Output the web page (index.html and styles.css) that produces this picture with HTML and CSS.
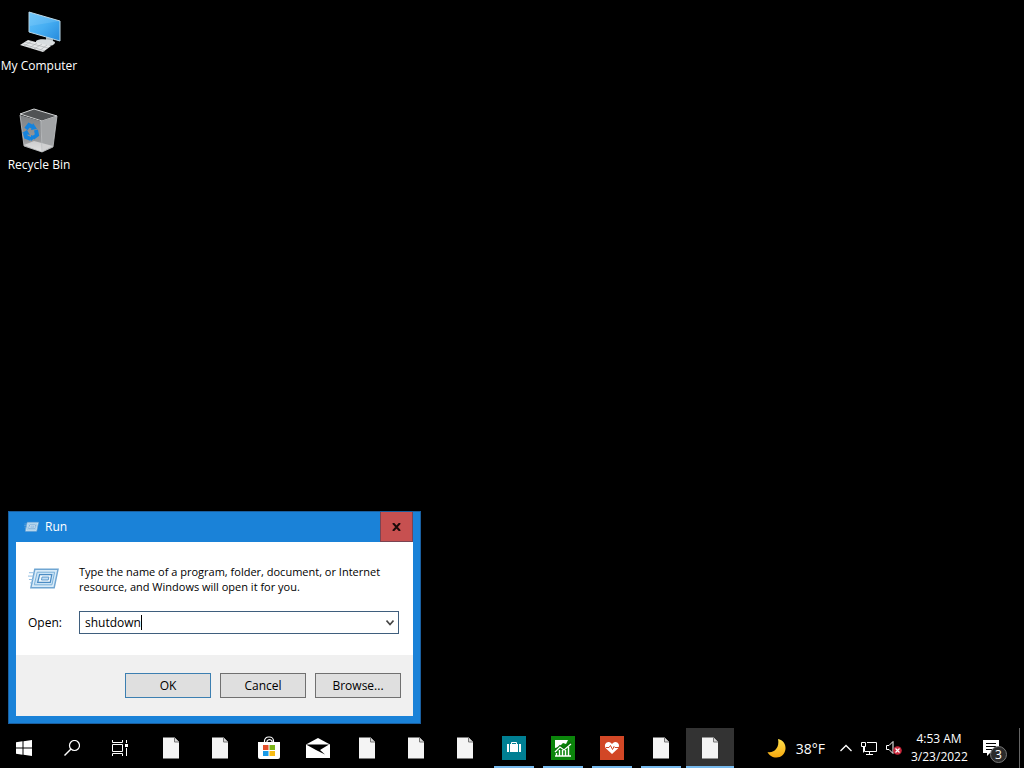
FILE: index.html
```html
<!DOCTYPE html>
<html lang="en">
<head>
  <meta charset="UTF-8">
  <meta name="viewport" content="width=device-width, initial-scale=1.0">
  <title>Desktop</title>
  <link rel="stylesheet" href="styles.css">
</head>
<body>
  <!-- shared icons -->
  <svg class="defs" width="0" height="0" aria-hidden="true">
    <symbol id="icon-file" viewBox="0 0 16 22">
      <path d="M0 .5h11.500L16 5v16.500H0z" fill="#f4f4f4"/>
      <path d="M11.500.5V5H16" fill="#d8d8d8" stroke="#777" stroke-width="1"/>
    </symbol>
    <symbol id="icon-run" viewBox="0 0 32 22">
      <path d="M7 1h24l-4 19H3z" fill="#d9ebf8" stroke="#6fa5d2" stroke-width="1.500"/>
      <path d="M9.500 4h18l-2.800 13H6.500z" fill="#cbe4f6" stroke="#79afd9"/>
      <path d="M12 6.500h12.500L23 14.500H10z" fill="#f1f8fd" stroke="#4c8cc4" stroke-width="1.300"/>
      <path d="M14.500 9h7l-.6 3h-7z" fill="#c3def3" stroke="#5f9bcd"/>
      <path d="M1 4.500h6M0 8h6M1 11.500h4M2 15h3" stroke="#8fbde2"/>
    </symbol>
  </svg>

  <main class="desktop">
    <a class="shortcut" href="#">
      <svg width="46" height="46" viewBox="0 0 46 46">
        <defs>
          <linearGradient id="screen" x1="0" y1="0" x2="1" y2="1">
            <stop offset="0" stop-color="#64c3fb"/>
            <stop offset=".5" stop-color="#46aef2"/>
            <stop offset="1" stop-color="#2589dc"/>
          </linearGradient>
        </defs>
        <path d="M30 28l7 2v5l-7-2z" fill="#a9b3b8"/>
        <path d="M20 33c2-2 8-2 15-1l4 2c0 3-4 4-7 4l-12-3z" fill="#d8dddf"/>
        <path d="M13 4l31 9v20l-31-9z" fill="url(#screen)" stroke="#b9d6e6"/>
        <path d="M13 4l31 9L14 18z" fill="#fff" opacity=".1"/>
        <path d="M12 32l23 6-8 6-23-7z" fill="#e6e8e9"/>
        <path d="M9 34l23 6M7 36l22 7M16 33l-8 5M21 35l-8 5M26 36l-8 5M31 37l-8 6" stroke="#a6abad" stroke-width=".6"/>
      </svg>
      <span>My Computer</span>
    </a>
    <a class="shortcut" href="#">
      <svg width="46" height="46" viewBox="0 0 46 46">
        <defs>
          <linearGradient id="bin" x1="0" y1="0" x2="0" y2="1">
            <stop offset="0" stop-color="#7f8285"/>
            <stop offset=".7" stop-color="#98999b"/>
            <stop offset="1" stop-color="#d0d0d0"/>
          </linearGradient>
        </defs>
        <path d="M4 7l14-5 23 7-15 5z" fill="#505254" stroke="#d4d6d7"/>
        <path d="M4 8l21 6 1 31-18-6z" fill="url(#bin)"/>
        <path d="M25 14l16-5-4 31-11 5z" fill="#a2a4a6"/>
        <path d="M8 38l10-4 19 5-11 6z" fill="#efefef" opacity=".6"/>
        <path d="M4 8l4 31 18 6 11-5 4-31M25 14l1 31" fill="none" stroke="#c4c7c9" stroke-width=".8"/>
        <g fill="none" stroke="#1583dd" stroke-width="4">
          <path d="M10 22l3-4 4 2"/>
          <path d="M20 23l1 5-4 3"/>
          <path d="M15 32l-5-2-1-4"/>
        </g>
        <path d="M17 16l4 6-6 1zM20 30l-5 4v-6zM6 26l5-3 3 5z" fill="#1583dd"/>
      </svg>
      <span>Recycle Bin</span>
    </a>

    <form class="dialog" role="dialog" aria-labelledby="run-title">
      <div class="titlebar">
        <svg width="15" height="12"><use href="#icon-run"/></svg>
        <span id="run-title">Run</span>
        <button type="button" class="close" aria-label="Close">
          <svg width="9" height="8" viewBox="0 0 9 8"><path d="M1 0l7 8M8 0L1 8" stroke="#1c0b0a" stroke-width="2"/></svg>
        </button>
      </div>
      <div class="dialog-body">
        <svg class="run-icon" width="31" height="22"><use href="#icon-run"/></svg>
        <p>Type the name of a program, folder, document, or Internet<br>resource, and Windows will open it for you.</p>
        <label for="open">Open:</label>
        <div class="combo">
          <input type="text" id="open" value="shutdown" autocomplete="off" spellcheck="false">
          <i class="caret"></i>
          <button type="button" aria-label="Show history">
            <svg width="8" height="6" viewBox="0 0 8 6"><path d="M.5.500L4 4.500 7.500.500" fill="none" stroke="#444" stroke-width="1.600"/></svg>
          </button>
        </div>
      </div>
      <div class="dialog-footer">
        <button type="button" class="default">OK</button>
        <button type="button">Cancel</button>
        <button type="button">Browse...</button>
      </div>
    </form>
  </main>

  <footer class="taskbar">
    <div class="system">
      <button aria-label="Start">
        <svg width="16" height="16" viewBox="0 0 16 16" fill="#fff"><path d="M0 2.200L6.500 1.300V7.500H0zM7.500 1.200L16 0v7.500H7.500zM0 8.500h6.500v6.200L0 13.800zM7.500 8.500H16V16l-8.500-1.200z"/></svg>
      </button>
      <button aria-label="Search">
        <svg width="16" height="16" viewBox="0 0 16 16" fill="none" stroke="#fff"><circle cx="10.500" cy="5.500" r="5" stroke-width="1.200"/><path d="M7 9L.5 15.500" stroke-width="1.400"/></svg>
      </button>
      <button aria-label="Task view">
        <svg width="16" height="16" viewBox="0 0 16 16" fill="none" stroke="#fff"><path d="M.5 0v2.500h10V0M.5 4.500h10v7H.5zM.5 16v-2.500h10V16M14.500 0v3M14.500 8v8"/><path d="M13 4h3v3h-3z" fill="#fff" stroke="none"/></svg>
      </button>
    </div>
    <nav class="apps">
      <button aria-label="File"><svg width="16" height="22"><use href="#icon-file"/></svg></button>
      <button aria-label="File"><svg width="16" height="22"><use href="#icon-file"/></svg></button>
      <button aria-label="Store">
        <svg width="24" height="24" viewBox="0 0 24 24">
          <path d="M7.500 7V5a4 4 0 0 1 4-4h1a4 4 0 0 1 4 4v2M10 7V5a3 3 0 0 1 5 0v2" fill="none" stroke="#fff" stroke-width="1.200"/>
          <path d="M1 6h22v15a2 2 0 0 1-2 2H3a2 2 0 0 1-2-2z" fill="#fff"/>
          <path d="M6 9h5.500v5H6z" fill="#e4502b"/>
          <path d="M12.500 9H18v5h-5.500z" fill="#7cb518"/>
          <path d="M6 15h5.500v5H6z" fill="#1a9be8"/>
          <path d="M12.500 15H18v5h-5.500z" fill="#f8bc14"/>
        </svg>
      </button>
      <button aria-label="Mail">
        <svg width="24" height="20" viewBox="0 0 24 20"><path d="M0 6.500L12 0l12 6.500V20H0z" fill="#fff"/><path d="M0 6.500h23L14 12l5 4.500L10 12z" fill="#000"/></svg>
      </button>
      <button aria-label="File"><svg width="16" height="22"><use href="#icon-file"/></svg></button>
      <button aria-label="File"><svg width="16" height="22"><use href="#icon-file"/></svg></button>
      <button aria-label="File"><svg width="16" height="22"><use href="#icon-file"/></svg></button>
      <button class="running" aria-label="Travel">
        <svg width="24" height="24" viewBox="0 0 24 24"><path d="M0 0h24v24H0z" fill="#007f93"/><path d="M5 8h2v8H5zM8 8h8v8H8zM17 8h2v8h-2z" fill="#fff"/><path d="M9.500 8V6.500h5V8" fill="none" stroke="#fff"/></svg>
      </button>
      <button class="running" aria-label="Finance">
        <svg width="24" height="24" viewBox="0 0 24 24">
          <path d="M0 0h24v24H0z" fill="#0b850b"/>
          <path d="M4 4h13l-2 4-3-1-4 4-4 1z" fill="#fff"/>
          <path d="M4 15l5-5 4 3 7-7" fill="none" stroke="#0b6d0b" stroke-width="2"/>
          <path d="M4 16l5-5 4 3 7-6" fill="none" stroke="#fff" stroke-width="1.300"/>
          <path d="M5.500 17v3M8.500 14v6M11.500 14v6M14.500 14v6M17.500 11v9M4 20h16" stroke="#fff" stroke-width="1.400"/>
        </svg>
      </button>
      <button class="running" aria-label="Health">
        <svg width="24" height="24" viewBox="0 0 24 24">
          <path d="M0 0h24v24H0z" fill="#d24726"/>
          <path d="M12 18L6 12.500C3.500 9 6 6 8.500 6 10.500 6 12 8 12 8s1.500-2 3.500-2c2.500 0 5 3 2.500 6.500z" fill="#fff"/>
          <path d="M6 11.500h3l1.500-2 2 4 1.500-3 1 1h4" fill="none" stroke="#d24726"/>
        </svg>
      </button>
      <button class="running" aria-label="File"><svg width="16" height="22"><use href="#icon-file"/></svg></button>
      <button class="running active" aria-label="Run"><svg width="16" height="22"><use href="#icon-file"/></svg></button>
    </nav>
    <div class="tray">
      <button class="weather">
        <svg width="19" height="19" viewBox="0 0 19 19">
          <defs><linearGradient id="moon" x1="0" y1="0" x2="0" y2="1"><stop offset="0" stop-color="#ffe04c"/><stop offset="1" stop-color="#f7a90f"/></linearGradient></defs>
          <path d="M11 0c5 1 8 5 7.500 10C18 15 14 18.500 9.500 18.500 5.500 18.500 2 16.500.5 13c6 1.500 12.500-4 10.500-13z" fill="url(#moon)"/>
        </svg>
        <span>38°F</span>
      </button>
      <button aria-label="Show hidden icons">
        <svg width="12" height="8" viewBox="0 0 12 8"><path d="M.5 7L6 1.500 11.500 7" fill="none" stroke="#fff" stroke-width="1.300"/></svg>
      </button>
      <button aria-label="Network">
        <svg width="16" height="14" viewBox="0 0 16 14" fill="none" stroke="#fff"><path d="M6 1.500h9.500v9H3.500V6M5 13.500h7M8.500 10.500v3"/><path d="M.5 1.500h4v4h-4zM2.500 5.500v6"/></svg>
      </button>
      <button aria-label="Volume muted">
        <svg width="16" height="14" viewBox="0 0 16 14"><path d="M.5 4.500H3l4-4v12l-4-4H.5z" fill="none" stroke="#fff"/><circle cx="11.500" cy="9.500" r="4.300" fill="#c9283c"/><path d="M9.500 7.500l4 4M13.500 7.500l-4 4" stroke="#fff" stroke-width="1.200"/></svg>
      </button>
      <button class="clock"><time datetime="2022-03-23T04:53">4:53 AM<br>3/23/2022</time></button>
      <button class="notifications" aria-label="3 notifications">
        <svg width="16" height="16" viewBox="0 0 16 16"><path d="M0 0h16v13H7l-3 3v-3H0z" fill="#fff"/><path d="M3 3.500h10M3 6.500h10M3 9.500h6" stroke="#000"/></svg>
        <span class="badge">3</span>
      </button>
      <button class="peek" aria-label="Show desktop"></button>
    </div>
  </footer>
</body>
</html>
```
FILE: styles.css
```css
* {
  box-sizing: border-box;
}
body {
  margin: 0;
  min-height: 100vh;
  display: flex;
  flex-direction: column;
  background-color: #000;
  color: #fff;
  font-family: 'Segoe UI', 'Open Sans', 'Noto Sans', sans-serif;
  font-size: 12px;
}
button {
  padding: 0;
  border: none;
  background: none;
  color: inherit;
  font: inherit;
}
svg {
  display: block;
}
.defs {
  position: absolute;
}
.desktop {
  flex: 1;
  position: relative;
  padding-top: 8px;
}
.shortcut {
  display: flex;
  flex-direction: column;
  align-items: center;
  width: 78px;
  height: 99px;
  color: #fff;
  line-height: 24px;
  text-decoration: none;
  white-space: nowrap;
}

/* run dialog */
.dialog {
  position: absolute;
  left: 8px;
  bottom: 4px;
  width: 413px;
  padding: 0 7px 7px;
  border: 1px solid #1a5f9f;
  background-color: #1a82d8;
  color: #000;
}
.titlebar {
  display: flex;
  align-items: center;
  gap: 6px;
  height: 30px;
  padding-left: 8px;
  color: #fff;
  line-height: 28px;
}
.close {
  display: flex;
  align-items: center;
  justify-content: center;
  width: 33px;
  height: 30px;
  margin-left: auto;
  border: 1px solid #7a4452;
  border-top: none;
  background-color: #c75050;
}
.dialog-body {
  display: grid;
  grid-template-columns: 51px minmax(0, 1fr);
  row-gap: 17px;
  align-items: center;
  padding: 22px 14px 21px 12px;
  background-color: #fff;
}
.dialog-body p {
  margin: 0;
  font-size: 11px;
  line-height: 15px;
  white-space: nowrap;
}
.combo {
  display: flex;
  align-items: center;
  position: relative;
  height: 23px;
  border: 1px solid #3f5e7d;
}
.combo input {
  flex: 1;
  min-width: 0;
  padding: 0 5px;
  border: none;
  outline: none;
  background: none;
  color: #000;
  font: inherit;
}
.combo button {
  padding: 4px;
}
.caret {
  position: absolute;
  left: 61px;
  top: 3px;
  width: 1px;
  height: 15px;
  background-color: #000;
}
.dialog-footer {
  display: flex;
  justify-content: flex-end;
  gap: 9px;
  padding: 18px 12px;
  background-color: #f0f0f0;
}
.dialog-footer button {
  width: 86px;
  height: 25px;
  border: 1px solid #707070;
  background-color: #dfdfdf;
}
.dialog-footer .default {
  border-color: #3c7fb1;
}

/* taskbar */
.taskbar {
  display: flex;
  height: 40px;
}
.system, .apps, .tray {
  display: flex;
}
.apps {
  gap: 1px;
  margin-left: 3px;
}
.system button, .apps button {
  display: flex;
  align-items: center;
  justify-content: center;
  position: relative;
  width: 48px;
}
.running::after {
  content: "";
  position: absolute;
  left: 4px;
  right: 4px;
  bottom: 0;
  height: 2px;
  background-color: #76b9ed;
}
.active {
  background-color: #333;
}
.active::after {
  left: 0;
  right: 0;
}
.tray {
  align-items: center;
  gap: 9px;
  margin-left: auto;
}
.weather {
  display: flex;
  align-items: center;
  gap: 10px;
  margin-right: 6px;
  font-size: 14px;
}
.clock {
  width: 56px;
  line-height: 18px;
  text-align: center;
  white-space: nowrap;
}
.notifications {
  position: relative;
  margin-left: 7px;
}
.badge {
  position: absolute;
  left: 7px;
  top: 6px;
  width: 17px;
  height: 17px;
  border: 1px solid #777;
  border-radius: 50%;
  background-color: #2b2b2b;
  line-height: 15px;
}
.peek {
  width: 5px;
  height: 40px;
  margin-left: 11px;
  border-left: 1px solid #666;
}
```
